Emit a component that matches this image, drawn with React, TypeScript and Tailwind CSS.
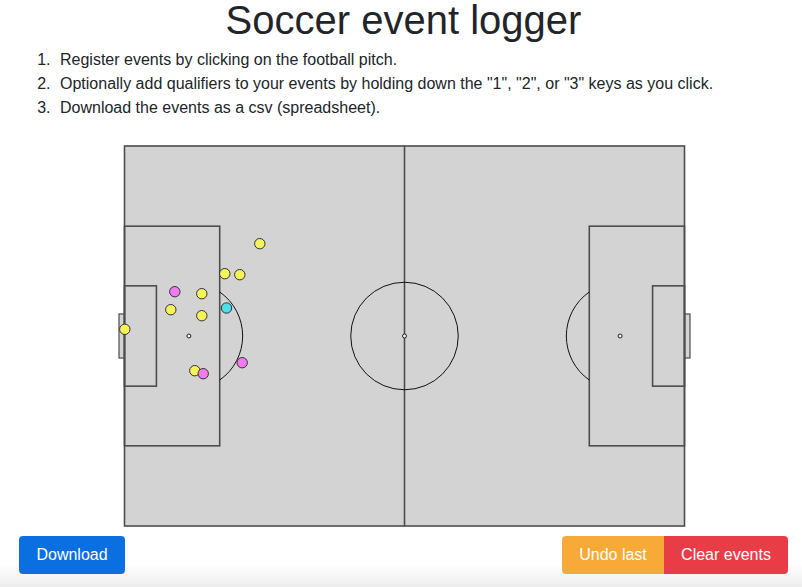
import React from 'react';

// event dots, in page pixel coordinates (the pitch group is shifted back to match)
const EVENTS = [
  { x: 259.3, y: 243.7, kind: 'default' },
  { x: 224.3, y: 273.7, kind: 'default' },
  { x: 239.3, y: 274.7, kind: 'default' },
  { x: 174.3, y: 291.7, kind: 'q2' },
  { x: 201.3, y: 293.7, kind: 'default' },
  { x: 170.3, y: 309.7, kind: 'default' },
  { x: 226, y: 308, kind: 'q1' },
  { x: 201.3, y: 315.7, kind: 'default' },
  { x: 124.3, y: 329.3, kind: 'default' },
  { x: 241.7, y: 362.7, kind: 'q2' },
  { x: 194.3, y: 370.7, kind: 'default' },
  { x: 202.7, y: 373.7, kind: 'q2' },
];

const FILL: Record<string, string> = {
  default: '#f5f35c',
  q1: '#4ce0ee',
  q2: '#f27af0',
};

// pitch geometry, opta style 0-100 on both axes
const PX = 124;
const PY = 146;
const PW = 560;
const PH = 380;
const sx = (v: number) => PX + (v / 100) * PW;
const sy = (v: number) => PY + (v / 100) * PH;
const R = 53.76;

const LINE = '#4d4d4d';

const Pitch = () => {
  const cy = sy(50);
  const boxL = sx(17);
  const boxR = sx(83);
  const spotL = sx(11.5);
  const spotR = sx(88.5);
  const dx = boxL - spotL;
  const dy = Math.sqrt(R * R - dx * dx);

  return (
    <svg width={580} height={392} className="block">
      <g transform="translate(-113.5 -140)">
        {/* goals */}
        <rect x={PX - 5.5} y={sy(44.2)} width={5.5} height={sy(55.8) - sy(44.2)} fill="#d3d3d3" stroke={LINE} strokeWidth={1.2} />
        <rect x={PX + PW} y={sy(44.2)} width={5.5} height={sy(55.8) - sy(44.2)} fill="#d3d3d3" stroke={LINE} strokeWidth={1.2} />

        <rect x={PX} y={PY} width={PW} height={PH} fill="#d3d3d3" stroke={LINE} strokeWidth={1.6} />
        <line x1={sx(50)} y1={PY} x2={sx(50)} y2={PY + PH} stroke={LINE} strokeWidth={1.6} />

        <circle cx={sx(50)} cy={cy} r={R} fill="none" stroke="#111" strokeWidth={1} />
        <circle cx={sx(50)} cy={cy} r={2} fill="#eee" stroke="#222" strokeWidth={1} />

        {/* left end */}
        <rect x={PX} y={sy(21.1)} width={boxL - PX} height={sy(78.9) - sy(21.1)} fill="none" stroke={LINE} strokeWidth={1.6} />
        <rect x={PX} y={sy(36.8)} width={sx(5.7) - PX} height={sy(63.2) - sy(36.8)} fill="none" stroke={LINE} strokeWidth={1.6} />
        <circle cx={spotL} cy={cy} r={2} fill="#eee" stroke="#222" strokeWidth={1} />
        <path d={`M ${boxL} ${cy - dy} A ${R} ${R} 0 0 1 ${boxL} ${cy + dy}`} fill="none" stroke="#111" strokeWidth={1} />

        {/* right end */}
        <rect x={boxR} y={sy(21.1)} width={PX + PW - boxR} height={sy(78.9) - sy(21.1)} fill="none" stroke={LINE} strokeWidth={1.6} />
        <rect x={sx(94.3)} y={sy(36.8)} width={PX + PW - sx(94.3)} height={sy(63.2) - sy(36.8)} fill="none" stroke={LINE} strokeWidth={1.6} />
        <circle cx={spotR} cy={cy} r={2} fill="#eee" stroke="#222" strokeWidth={1} />
        <path d={`M ${boxR} ${cy - dy} A ${R} ${R} 0 0 0 ${boxR} ${cy + dy}`} fill="none" stroke="#111" strokeWidth={1} />

        {EVENTS.map((e, i) => (
          <circle key={i} cx={e.x} cy={e.y} r={5.2} fill={FILL[e.kind]} stroke="#333" strokeWidth={1} />
        ))}
      </g>
    </svg>
  );
};

export default function App() {
  return (
    <div className="w-full h-[587px] overflow-hidden bg-white">
      <div
        className="w-[807px] h-[587px] flex flex-col text-[#212529] bg-gradient-to-b from-white from-[96%] to-[#ededed]"
        style={{ fontFamily: '"Liberation Sans", Arial, Helvetica, sans-serif' }}
      >
        <h1 className="text-[40px] leading-[40px] font-medium text-center mb-2">Soccer event logger</h1>

        <ol className="list-decimal pl-[55px] text-base leading-6">
          <li className="pl-[5px]">Register events by clicking on the football pitch.</li>
          <li className="pl-[5px]">Optionally add qualifiers to your events by holding down the "1", "2", or "3" keys as you click.</li>
          <li className="pl-[5px]">Download the events as a csv (spreadsheet).</li>
        </ol>

        <div className="flex justify-center mt-[20px]">
          <Pitch />
        </div>

        <div className="flex justify-between items-center px-[19px] mt-[4px]">
          <button className="w-[106px] h-[38px] rounded bg-[#0a6fe0] text-white text-base">Download</button>
          <div className="flex">
            <button className="w-[102px] h-[38px] rounded-l bg-[#f8aa38] text-white text-base">Undo last</button>
            <button className="w-[124px] h-[38px] rounded-r bg-[#e83c47] text-white text-base">Clear events</button>
          </div>
        </div>
      </div>
    </div>
  );
}
